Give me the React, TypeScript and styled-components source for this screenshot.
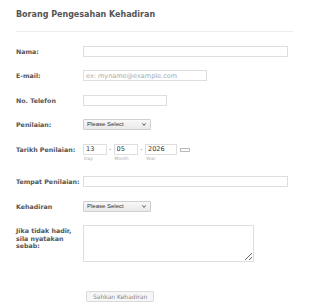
import React from 'react';
import styled, { createGlobalStyle } from 'styled-components';

const GlobalStyle = createGlobalStyle`
    html, body {
        margin: 0;
        padding: 0;
        background: #ffffff;
    }
    body {
        font-family: "DejaVu Sans", Verdana, sans-serif;
    }
`;

const FormContainer = styled.form`
    width: 310px;
    box-sizing: border-box;
    padding: 0 17px 0 16px;
    color: #555;
`;

const Header = styled.div`
    padding: 10px 0 11px;
    border-bottom: 1px solid #ececec;
`;

const Title = styled.h2`
    margin: 0;
    font-size: 8px;
    line-height: 10px;
    font-weight: bold;
    color: #555;
`;

const FieldList = styled.ul`
    list-style: none;
    margin: 0;
    padding: 7px 0 0;
`;

const Row = styled.li<{ $extraTop?: number }>`
    display: flex;
    align-items: flex-start;
    padding: ${p => 6.75 + (p.$extraTop || 0)}px 0 6.75px;
`;

const Label = styled.label<{ $multi?: boolean }>`
    flex: 0 0 67px;
    font-size: 6.3px;
    font-weight: bold;
    color: #555;
    white-space: nowrap;
    line-height: ${p => (p.$multi ? '7.3px' : '11px')};
    margin-top: ${p => (p.$multi ? '2px' : '0')};
`;

const TextInput = styled.input<{ $width: number }>`
    display: block;
    box-sizing: border-box;
    width: ${p => p.$width}px;
    height: 11px;
    margin: 0;
    padding: 0 2px;
    border: 1px solid #dedede;
    border-radius: 0;
    background: #fff;
    font-family: "DejaVu Sans", Verdana, sans-serif;
    font-size: 6.5px;
    color: #333;
    outline: none;

    &::placeholder {
        color: #aaa;
    }
`;

const SelectWrap = styled.div`
    position: relative;
    width: 68px;
    height: 11px;
`;

const Select = styled.select`
    display: block;
    box-sizing: border-box;
    width: 100%;
    height: 11px;
    margin: 0;
    padding: 0 0 0 3px;
    appearance: none;
    -webkit-appearance: none;
    border: 1px solid #cfcfcf;
    border-radius: 1px;
    background: linear-gradient(#f8f8f8, #e9e9e9);
    font-family: "Liberation Sans", Arial, sans-serif;
    font-size: 6px;
    line-height: 9px;
    color: #333;
    outline: none;
`;

const Chevron = styled.svg`
    position: absolute;
    right: 5px;
    top: 4px;
    width: 4px;
    height: 3px;
    pointer-events: none;
`;

const DateGroup = styled.div`
    display: flex;
    align-items: flex-start;
`;

const DatePart = styled.div`
    display: flex;
    flex-direction: column;
`;

const SubLabel = styled.span`
    font-size: 4.5px;
    line-height: 8px;
    padding-left: 1px;
    color: #aaa;
`;

const Dash = styled.span`
    width: 7px;
    text-align: center;
    font-size: 6.5px;
    line-height: 11px;
    color: #777;
`;

const CalendarIcon = styled.svg`
    margin: 4px 0 0 3px;
    width: 10px;
    height: 4px;
`;

const TextArea = styled.textarea`
    display: block;
    box-sizing: border-box;
    width: 171px;
    height: 37px;
    margin: 0;
    padding: 2px;
    border: 1px solid #dedede;
    border-radius: 0;
    font-family: "DejaVu Sans", Verdana, sans-serif;
    font-size: 6.5px;
    outline: none;
`;

const SubmitButton = styled.button`
    display: block;
    box-sizing: border-box;
    height: 11px;
    margin: 0 0 0 70px;
    padding: 0 6px;
    border: 1px solid #dadada;
    border-radius: 1px;
    background: #f6f6f6;
    font-family: "DejaVu Sans", Verdana, sans-serif;
    font-size: 6px;
    line-height: 9px;
    color: #888;
`;

const SelectBox: React.FC = () => (
    <SelectWrap>
        <Select defaultValue="">
            <option value="">Please Select</option>
            <option value="1">1</option>
            <option value="2">2</option>
        </Select>
        <Chevron viewBox="0 0 4 3">
            <path d="M0.4 0.4 L2 2.4 L3.6 0.4" fill="none" stroke="#444" strokeWidth="0.9" />
        </Chevron>
    </SelectWrap>
);

const dateParts = [
    { label: 'Day', value: '13', width: 23.5 },
    { label: 'Month', value: '05', width: 24.5 },
    { label: 'Year', value: '2026', width: 32 },
];

const App: React.FC = () => {
    return (
        <>
            <GlobalStyle />
            <FormContainer onSubmit={e => e.preventDefault()}>
                <Header>
                    <Title>Borang Pengesahan Kehadiran</Title>
                </Header>
                <FieldList>
                    <Row>
                        <Label>Nama:</Label>
                        <TextInput $width={205} />
                    </Row>
                    <Row>
                        <Label>E-mail:</Label>
                        <TextInput $width={124} placeholder="ex: myname@example.com" />
                    </Row>
                    <Row>
                        <Label>No. Telefon</Label>
                        <TextInput $width={84} />
                    </Row>
                    <Row>
                        <Label>Penilaian:</Label>
                        <SelectBox />
                    </Row>
                    <Row>
                        <Label>Tarikh Penilaian:</Label>
                        <DateGroup>
                            {dateParts.map((part, i) => (
                                <React.Fragment key={part.label}>
                                    {i > 0 && <Dash>-</Dash>}
                                    <DatePart>
                                        <TextInput $width={part.width} defaultValue={part.value} />
                                        <SubLabel>{part.label}</SubLabel>
                                    </DatePart>
                                </React.Fragment>
                            ))}
                            <CalendarIcon viewBox="0 0 10 4">
                                <rect x="0.5" y="0.5" width="9" height="3" fill="#fafafa" stroke="#aaa" strokeWidth="0.8" />
                            </CalendarIcon>
                        </DateGroup>
                    </Row>
                    <Row>
                        <Label>Tempat Penilaian:</Label>
                        <TextInput $width={205} />
                    </Row>
                    <Row>
                        <Label>Kehadiran</Label>
                        <SelectBox />
                    </Row>
                    <Row>
                        <Label $multi>
                            Jika tidak hadir,
                            <br />
                            sila nyatakan
                            <br />
                            sebab:
                        </Label>
                        <TextArea />
                    </Row>
                    <Row $extraTop={15}>
                        <SubmitButton type="submit">Sahkan Kehadiran</SubmitButton>
                    </Row>
                </FieldList>
            </FormContainer>
        </>
    );
};

export default App;
